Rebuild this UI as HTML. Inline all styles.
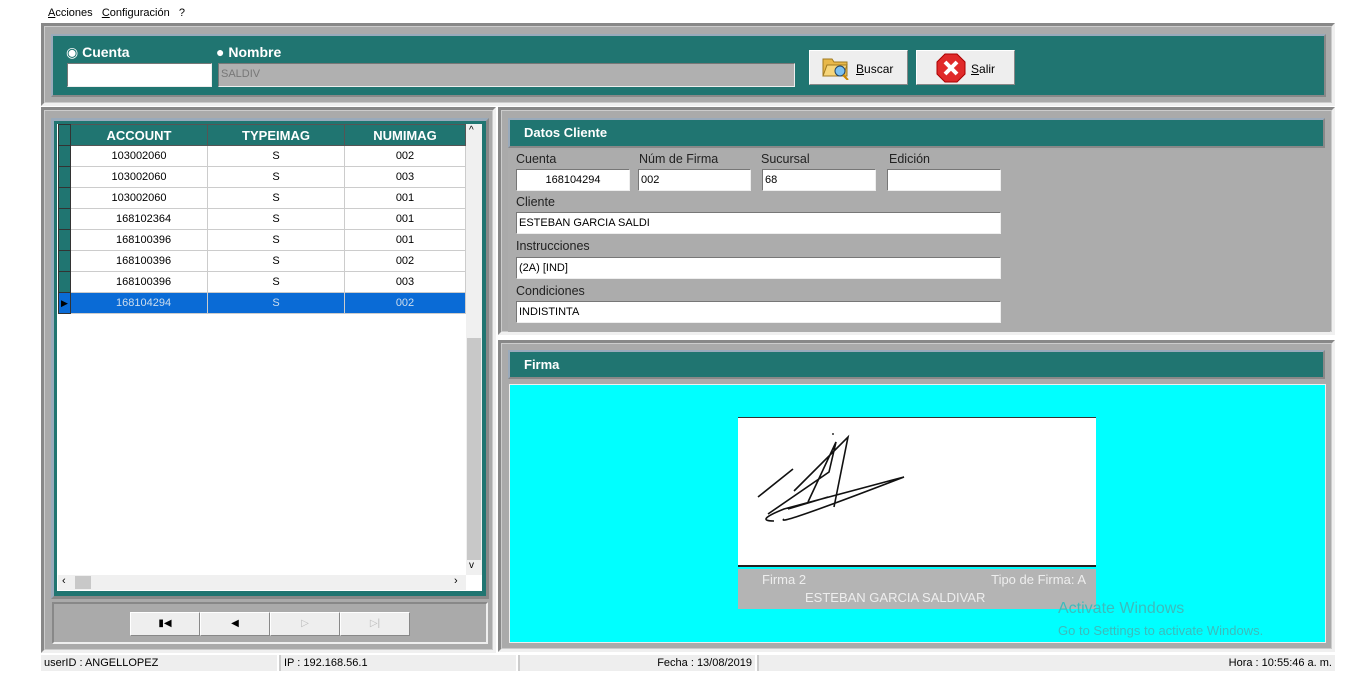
<!DOCTYPE html>
<html><head><meta charset="utf-8"><style>
*{box-sizing:border-box;margin:0;padding:0}
body{width:1367px;height:682px;background:#fff;position:relative;overflow:hidden;font-family:"Liberation Sans","DejaVu Sans",sans-serif;font-size:12px;color:#000}
.a{position:absolute}
.frame{position:absolute;background:#aaa;border:3px solid;border-color:#888 #f0f0f0 #f0f0f0 #888;box-shadow:inset 0 0 0 1px #ccc}
.teal{background:#207571;border:2px solid;border-color:#9ab #888 #888 #9ab}
.inp{position:absolute;background:#fff;border:1px solid;border-color:#777 #eee #eee #777;height:22px;font-size:11px;padding:4px 2px}
.lbl{position:absolute;font-size:12.5px;color:#222}
.hdr{position:absolute;color:#fff;font-weight:bold;font-size:13px}
table{border-collapse:collapse;font-size:11px}
td{height:21px;border:1px solid #ccc;text-align:center;background:#fff}
th{height:21px;background:#207571;color:#fff;font-size:13px;border:1px solid #555}
.sel td{background:#0a6bd6;color:#cde}
.rh{width:12px;background:#207571;border:1px solid #333}
.btn{position:absolute;background:#eee;border:1px solid;border-color:#fff #888 #888 #fff;text-align:center;font-size:11px}
.sb{position:absolute;top:655px;height:16px;background:#eee;font-size:11px;padding:2px 3px;border-left:2px solid #ccc}
</style></head><body>
<div class="a" style="left:48px;top:7px;font-size:11px"><u>A</u>cciones&nbsp;&nbsp; <u>C</u>onfiguración&nbsp;&nbsp; ?</div>

<div class="frame" style="left:41px;top:23px;width:1294px;height:83px"></div>
<div class="a teal" style="left:51px;top:34px;width:1275px;height:63px"></div>
<div class="hdr" style="left:66px;top:44px;font-size:14px">◉ Cuenta</div>
<div class="hdr" style="left:216px;top:44px;font-size:14px">● Nombre</div>
<div class="inp" style="left:67px;top:63px;width:145px;height:24px"></div>
<div class="inp" style="left:218px;top:63px;width:577px;height:24px;background:#b0b0b0;color:#777">SALDIV</div>
<div class="btn" style="left:809px;top:50px;width:99px;height:35px;padding-top:11px;padding-left:46px;text-align:left;font-size:12px"><u>B</u>uscar</div>
<svg class="a" style="left:821px;top:54px" width="30" height="26"><path d="M2 5h9l2 3h13v14H2z" fill="#e8b84a" stroke="#a07a20"/><path d="M2 22l4-11h20l-4 11z" fill="#f6d57a" stroke="#a07a20"/><circle cx="19" cy="17" r="5" fill="#7bc0f0" stroke="#246"/><path d="M22 21l5 5" stroke="#c80" stroke-width="2"/></svg>
<div class="btn" style="left:916px;top:50px;width:99px;height:35px;padding-top:11px;padding-left:54px;text-align:left;font-size:12px"><u>S</u>alir</div>
<svg class="a" style="left:936px;top:53px" width="30" height="30"><polygon points="9,1 21,1 29,9 29,21 21,29 9,29 1,21 1,9" fill="#e02a2a" stroke="#a00"/><path d="M9 9l12 12M21 9L9 21" stroke="#fff" stroke-width="4"/></svg>

<div class="frame" style="left:41px;top:107px;width:455px;height:546px"></div>
<div class="a teal" style="left:51px;top:118px;width:438px;height:481px;border-width:3px"></div>
<div class="a" style="left:57px;top:124px;width:425px;height:467px;background:#fff"></div>
<table class="a" style="left:58px;top:124px;width:408px">
<tr><th class="rh"></th><th style="width:137px">ACCOUNT</th><th style="width:137px">TYPEIMAG</th><th>NUMIMAG</th></tr>
<tr><td class="rh"></td><td>103002060</td><td>S</td><td>002</td></tr>
<tr><td class="rh"></td><td>103002060</td><td>S</td><td>003</td></tr>
<tr><td class="rh"></td><td>103002060</td><td>S</td><td>001</td></tr>
<tr><td class="rh"></td><td>&nbsp;&nbsp;&nbsp;168102364</td><td>S</td><td>001</td></tr>
<tr><td class="rh"></td><td>&nbsp;&nbsp;&nbsp;168100396</td><td>S</td><td>001</td></tr>
<tr><td class="rh"></td><td>&nbsp;&nbsp;&nbsp;168100396</td><td>S</td><td>002</td></tr>
<tr><td class="rh"></td><td>&nbsp;&nbsp;&nbsp;168100396</td><td>S</td><td>003</td></tr>
<tr class="sel"><td class="rh" style="color:#000;font-size:9px">▶</td><td>&nbsp;&nbsp;&nbsp;168104294</td><td>S</td><td>002</td></tr>
</table>
<div class="a" style="left:466px;top:124px;width:16px;height:451px;background:#f0f0f0"></div>
<div class="a" style="left:467px;top:338px;width:14px;height:222px;background:#c8c8c8"></div>
<div class="a" style="left:469px;top:125px;font-size:10px">^</div>
<div class="a" style="left:469px;top:560px;font-size:10px">v</div>
<div class="a" style="left:58px;top:575px;width:408px;height:15px;background:#f0f0f0"></div>
<div class="a" style="left:75px;top:576px;width:16px;height:13px;background:#c8c8c8"></div>
<div class="a" style="left:62px;top:575px;font-size:11px">‹</div>
<div class="a" style="left:454px;top:575px;font-size:11px">›</div>
<div class="a" style="left:52px;top:602px;width:436px;height:42px;border:2px solid;border-color:#888 #eee #eee #888;background:#aaa"></div>
<div class="btn" style="left:130px;top:612px;width:70px;height:24px;padding-top:5px;font-size:10px">▮◀</div>
<div class="btn" style="left:200px;top:612px;width:70px;height:24px;padding-top:5px;font-size:10px">◀</div>
<div class="btn" style="left:270px;top:612px;width:70px;height:24px;padding-top:5px;font-size:10px;color:#bbb">▷</div>
<div class="btn" style="left:340px;top:612px;width:70px;height:24px;padding-top:5px;font-size:10px;color:#bbb">▷|</div>

<div class="frame" style="left:498px;top:107px;width:837px;height:228px"></div>
<div class="a teal" style="left:508px;top:118px;width:817px;height:30px"></div>
<div class="hdr" style="left:524px;top:125px">Datos Cliente</div>
<div class="a" style="left:508px;top:150px;width:822px;height:182px;background:#acacac"></div>
<div class="lbl" style="left:516px;top:152px">Cuenta</div>
<div class="lbl" style="left:639px;top:152px">Núm de Firma</div>
<div class="lbl" style="left:761px;top:152px">Sucursal</div>
<div class="lbl" style="left:889px;top:152px">Edición</div>
<div class="inp" style="left:516px;top:169px;width:114px;text-align:center">168104294</div>
<div class="inp" style="left:638px;top:169px;width:113px">002</div>
<div class="inp" style="left:762px;top:169px;width:114px">68</div>
<div class="inp" style="left:887px;top:169px;width:114px"></div>
<div class="lbl" style="left:516px;top:195px">Cliente</div>
<div class="inp" style="left:516px;top:212px;width:485px">ESTEBAN GARCIA SALDI</div>
<div class="lbl" style="left:516px;top:239px">Instrucciones</div>
<div class="inp" style="left:516px;top:257px;width:485px">(2A) [IND]</div>
<div class="lbl" style="left:516px;top:284px">Condiciones</div>
<div class="inp" style="left:516px;top:301px;width:485px">INDISTINTA</div>

<div class="frame" style="left:498px;top:340px;width:837px;height:312px"></div>
<div class="a teal" style="left:508px;top:350px;width:817px;height:29px"></div>
<div class="hdr" style="left:524px;top:357px">Firma</div>
<div class="a" style="left:509px;top:384px;width:817px;height:259px;background:#0ff;border:1px solid #eee"></div>
<div class="a" style="left:738px;top:417px;width:358px;height:150px;background:#fff;border-top:1px solid #333;border-bottom:2px solid #222"></div>
<svg class="a" style="left:738px;top:417px" width="358" height="150"><g fill="none" stroke="#111" stroke-width="1.6"><path d="M20 80l35-28M30 97L91 55l7-30-28 60M56 74L110 20 96 90M36 104q-20 0 10-12l120-32q-130 50-120 42M50 92l40-12"/></g><circle cx="95" cy="17" r="1" fill="#333"/></svg>
<div class="a" style="left:738px;top:569px;width:358px;height:40px;background:#b4b4b4;color:#eee;font-size:13px">
<span class="a" style="left:24px;top:3px">Firma 2</span><span class="a" style="right:10px;top:3px">Tipo de Firma: A</span><span class="a" style="left:67px;top:21px">ESTEBAN GARCIA SALDIVAR</span></div>
<div class="a" style="left:1058px;top:600px;font-size:16px;color:#3bbcbc">Activate Windows</div>
<div class="a" style="left:1058px;top:623px;font-size:13px;color:#3bbcbc">Go to Settings to activate Windows.</div>

<div class="sb" style="left:41px;width:236px;border-left:none">userID : ANGELLOPEZ</div>
<div class="sb" style="left:279px;width:237px">IP : 192.168.56.1</div>
<div class="sb" style="left:518px;width:237px;text-align:right">Fecha : 13/08/2019</div>
<div class="sb" style="left:757px;width:578px;text-align:right">Hora : 10:55:46 a. m.</div>
</body></html>
